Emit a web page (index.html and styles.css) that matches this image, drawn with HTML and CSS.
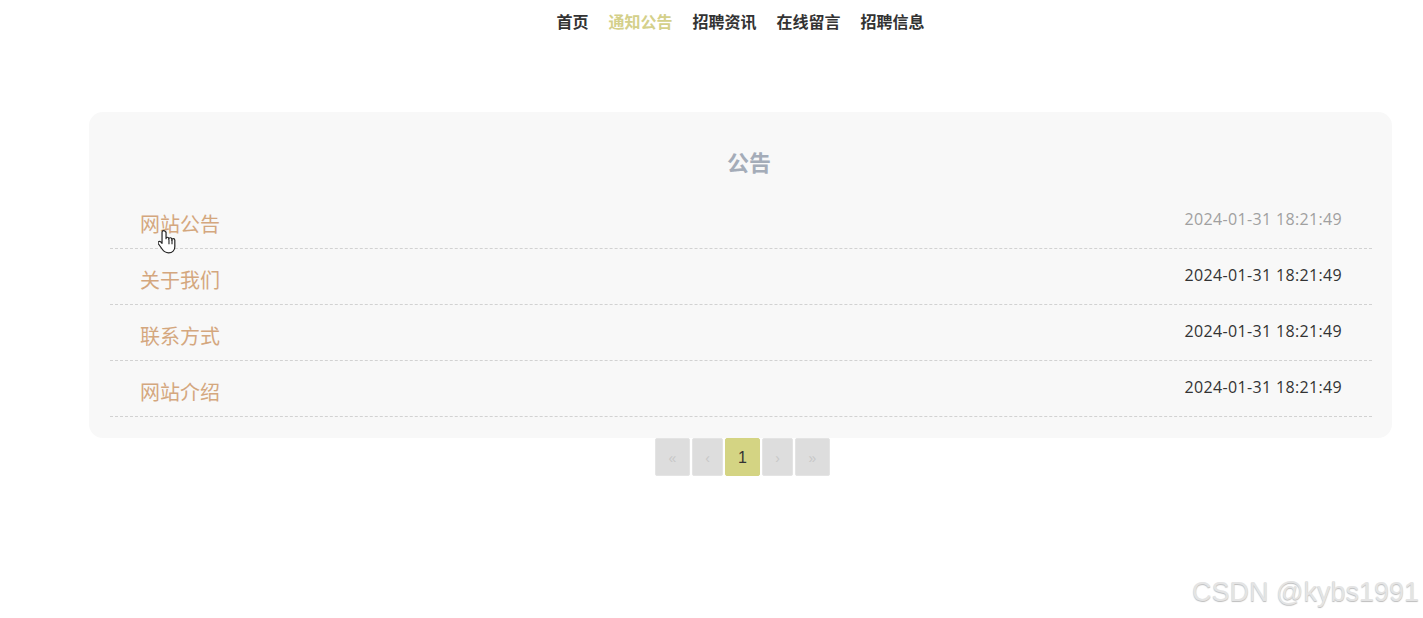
FILE: index.html
```html
<!DOCTYPE html>
<html lang="zh">
<head>
    <meta charset="UTF-8">
    <meta name="viewport" content="width=device-width, initial-scale=1.0">
    <title>通知公告</title>
    <link rel="stylesheet" href="styles.css">
</head>
<body>

<div class="wrap">
    <!-- 顶部导航 -->
    <ul class="nav">
        <li><a href="#">首页</a></li>
        <li class="active"><a href="#">通知公告</a></li>
        <li><a href="#">招聘资讯</a></li>
        <li><a href="#">在线留言</a></li>
        <li><a href="#">招聘信息</a></li>
    </ul>

    <!-- 公告列表 -->
    <div class="news-box">
        <h2 class="news-title">公告</h2>
        <ul class="news-list">
            <li class="news-item hover">
                <a href="#" class="item-name">网站公告</a>
                <span class="item-time">2024-01-31 18:21:49</span>
                <svg class="cursor" width="18" height="24" viewBox="0 0 18 24">
                    <path d="M5 1.5c-.9 0-1.5.7-1.5 1.5v10.2l-1.2-1.3c-.7-.7-1.7-.7-2.2 0-.4.5-.4 1.2 0 1.8l3.6 5c1.2 1.7 2.6 3.3 5.8 3.3 3.6 0 5.8-2.4 5.8-5.6V10.3c0-.8-.6-1.4-1.4-1.4s-1.4.6-1.4 1.4V9.5c0-.8-.6-1.4-1.4-1.4s-1.4.6-1.4 1.4V9c0-.8-.6-1.4-1.4-1.4S7.2 8.2 7.2 9V3C6.5 2.2 6 1.5 5 1.5z" fill="#fff" stroke="#222" stroke-width="1.1" stroke-linejoin="round"/>
                    <path d="M9.9 9.6v4.4M12.7 10.2v3.8" stroke="#222" stroke-width="1" fill="none"/>
                </svg>
            </li>
            <li class="news-item">
                <a href="#" class="item-name">关于我们</a>
                <span class="item-time">2024-01-31 18:21:49</span>
            </li>
            <li class="news-item">
                <a href="#" class="item-name">联系方式</a>
                <span class="item-time">2024-01-31 18:21:49</span>
            </li>
            <li class="news-item">
                <a href="#" class="item-name">网站介绍</a>
                <span class="item-time">2024-01-31 18:21:49</span>
            </li>
        </ul>
    </div>

    <!-- 分页 -->
    <div class="pager">
        <a href="#" class="page-btn wide">&laquo;</a>
        <a href="#" class="page-btn">&lsaquo;</a>
        <a href="#" class="page-btn wide current">1</a>
        <a href="#" class="page-btn">&rsaquo;</a>
        <a href="#" class="page-btn wide">&raquo;</a>
    </div>
</div>

<div class="watermark">CSDN @kybs1991</div>

</body>
</html>
```

FILE: styles.css
```css
body {
    margin: 0;
    padding: 0;
    background-color: #fff;
    font-family: "Noto Sans CJK SC", sans-serif;
    height: 618px;
    position: relative;
    overflow: hidden;
}

a {
    text-decoration: none;
}

.wrap {
    margin: 0 31px 0 89px;
}

/* 导航 */
.nav {
    list-style: none;
    margin: 0;
    padding: 9px 0 0;
    display: flex;
    justify-content: center;
    gap: 20px;
    height: 112px;
    box-sizing: border-box;
}

.nav a {
    font-size: 16px;
    font-weight: bold;
    line-height: 24px;
    color: #333;
}

.nav .active a {
    color: #d4d08a;
}

/* 公告 */
.news-box {
    background-color: #f8f8f8;
    border-radius: 14px;
    padding: 34px 20px 21px 21px;
}

.news-title {
    margin: 0 0 17px;
    padding-left: 16px;
    text-align: center;
    font-size: 22px;
    line-height: 30px;
    font-weight: bold;
    color: #a4acb8;
}

.news-list {
    list-style: none;
    margin: 0;
    padding: 0;
}

.news-item {
    display: flex;
    justify-content: space-between;
    align-items: center;
    padding: 19px 30px 12px;
    height: 24px;
    border-bottom: 1px dashed #d2d2d2;
    position: relative;
}

.item-name {
    font-size: 20px;
    line-height: 24px;
    color: #d4a77e;
}

.item-time {
    font-family: "Open Sans", "Noto Sans", sans-serif;
    font-size: 16px;
    letter-spacing: 0.35px;
    line-height: 22px;
    padding-bottom: 10px;
    color: #333;
}

.news-item.hover .item-time {
    color: #a0a0a0;
}

.cursor {
    position: absolute;
    left: 48px;
    top: 36px;
    width: 20px;
    height: 26px;
}

/* 分页 */
.pager {
    display: flex;
    justify-content: center;
    gap: 2px;
    padding-left: 4px;
}

.page-btn {
    width: 31px;
    height: 38px;
    line-height: 38px;
    text-align: center;
    background-color: #ddd;
    border: 1px solid #e4e4e4;
    box-sizing: border-box;
    border-radius: 2px;
    color: #c8c8c8;
    font-size: 14px;
    font-family: "Liberation Sans", sans-serif;
}

.page-btn.wide {
    width: 35px;
}

.page-btn.current {
    background-color: #d4d483;
    border-color: #d4d483;
    color: #333;
    font-size: 16px;
}

/* 水印 */
.watermark {
    position: absolute;
    right: 4px;
    bottom: 10px;
    font-family: "Liberation Sans", Arial, sans-serif;
    font-size: 27px;
    color: #e4e4e4;
    text-shadow: 0 1px 1px #bdbdbd;
}
```
